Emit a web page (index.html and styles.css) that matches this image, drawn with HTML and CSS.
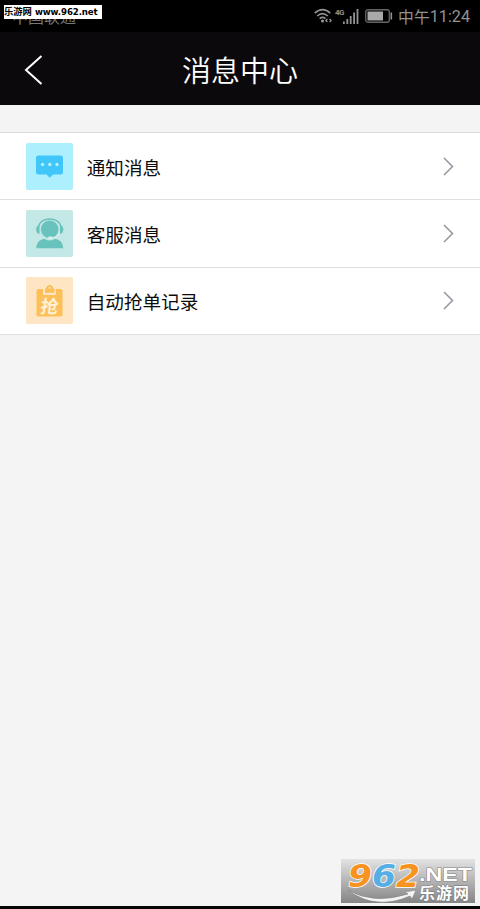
FILE: index.html
```html
<!DOCTYPE html>
<html lang="zh-CN">
<head>
<meta charset="utf-8">
<title>消息中心</title>
<link rel="stylesheet" href="styles.css">
</head>
<body>
<div class="screen">
  <div class="status">
    <span class="carrier">中国联通</span>
    <div class="site-tag"><span class="site-name">乐游网</span><span class="site-url">www.962.net</span></div>
    <div class="indicators">
      <svg class="wifi" width="19" height="16" viewBox="0 0 19 16" fill="none" stroke="#929292" stroke-width="1.6">
        <path d="M.8 5.2Q8.5-1.8 16.2 5.2M3.2 8Q8.5 3.2 13.8 8M5.6 10.7Q8.5 8.2 11.4 10.7"/>
        <circle cx="8.5" cy="13" r="1.6" fill="#929292" stroke="none"/>
        <path d="M13.4 11 11.9 12.5l1.5 1.5M15.600 11l1.500 1.500-1.500 1.500" stroke-width="1.3"/>
      </svg>
      <span class="net">4G</span>
      <svg class="signal" width="16" height="15" viewBox="0 0 16 15" fill="#929292">
        <path d="M0 12.5h1.8V15H0zM3.4 10h1.8v5H3.4zM6.8 7h1.8v8H6.8zM10.2 3.500h1.800V15h-1.800zM13.600 0h1.800v15h-1.800z"/>
      </svg>
      <svg class="battery" width="28" height="14" viewBox="0 0 28 14">
        <rect x=".75" y=".75" width="23.500" height="12.500" rx="2" fill="none" stroke="#666" stroke-width="1.300"/>
        <path d="M2.500 2.500h15.500v9H2.500z" fill="#a8a8a8"/>
        <path d="M25.500 3.500h1.600v7h-1.600z" fill="#929292"/>
      </svg>
      <span class="time"><span class="time-part">中午</span>11:24</span>
    </div>
  </div>
  <header class="header">
    <svg class="back" width="20" height="32" viewBox="0 0 20 32" fill="none" stroke="#fff" stroke-width="2"><path d="M17.500 2 2 16l15.500 14"/></svg>
    <h1 class="title">消息中心</h1>
  </header>
  <main class="list">
    <a class="row">
      <svg class="icon" viewBox="0 0 47 47">
        <rect width="47" height="47" rx="2" fill="#adeffd"/>
        <path d="M12.500 12.500h22a2.500 2.500 0 0 1 2.500 2.500v14a2.500 2.500 0 0 1-2.500 2.500H27L23.700 34.700 20.500 31.500h-8a2.500 2.500 0 0 1-2.500-2.500V15a2.500 2.500 0 0 1 2.500-2.500z" fill="#40c6f8"/>
        <g fill="#b5f3ff"><circle cx="16.500" cy="21.500" r="1.700"/><circle cx="23.800" cy="21.500" r="1.700"/><circle cx="31" cy="21.500" r="1.700"/></g>
      </svg>
      <span class="label">通知消息</span>
      <svg class="chevron" viewBox="0 0 11 19"><path d="M1 1l8.500 8.500L1 18"/></svg>
    </a>
    <a class="row">
      <svg class="icon" viewBox="0 0 47 47">
        <rect width="47" height="47" rx="2" fill="#c4e8e5"/>
        <path d="M12.800 16.500C14 6.500 33.500 6.500 34.700 16.500" fill="none" stroke="#69c3bd" stroke-width="1.500"/>
        <circle cx="23.700" cy="19.300" r="8.800" fill="#69c3bd"/>
        <path d="M13.500 15v9c-4.500-.5-4.500-8.500 0-9zM34 15v9c4.500-.5 4.500-8.500 0-9z" fill="#69c3bd"/>
        <path d="M10.300 38.300c0-5.500 3-8.600 8.200-9.600 3 2.300 7.500 2.300 10.500 0 5.200 1 8.200 4.100 8.200 9.600z" fill="#69c3bd"/>
        <path d="M33.500 23.500c-1.500 3-4.500 4.200-8.500 4.300" fill="none" stroke="#d7f1ee" stroke-width="1.100"/>
        <ellipse cx="24.300" cy="27.700" rx="2.200" ry="1.500" fill="#d7f1ee"/>
      </svg>
      <span class="label">客服消息</span>
      <svg class="chevron" viewBox="0 0 11 19"><path d="M1 1l8.500 8.500L1 18"/></svg>
    </a>
    <a class="row">
      <svg class="icon" viewBox="0 0 47 47">
        <rect width="47" height="47" rx="2" fill="#fee6c4"/>
        <path d="M12.500 12H17v4.500a1.500 1.500 0 0 0 1.500 1.500h10a1.500 1.500 0 0 0 1.500-1.500V12h4.500a2 2 0 0 1 2 2v23.500a2 2 0 0 1-2 2h-22a2 2 0 0 1-2-2V14a2 2 0 0 1 2-2z" fill="#fdbf58"/>
        <path d="M19 11.500h1.200c0-4.800 7-4.800 7 0h1.300v4.200H19z" fill="#fdbf58"/>
        <path d="M22.300 11.500c0-2 2.800-2 2.800 0z" fill="#fee6c4"/>
        <text class="grab" x="-8.800" y="7.700" transform="translate(23.500 28.500) skewX(-8)">抢</text>
      </svg>
      <span class="label">自动抢单记录</span>
      <svg class="chevron" viewBox="0 0 11 19"><path d="M1 1l8.500 8.500L1 18"/></svg>
    </a>
  </main>
  <svg class="watermark" width="134" height="44" viewBox="0 0 134 44">
    <defs>
      <linearGradient id="plate" x1="0" y1="0" x2="0" y2="1"><stop offset="0" stop-color="#e3e3e3"/><stop offset="1" stop-color="#858585"/></linearGradient>
    </defs>
    <rect width="134" height="44" fill="url(#plate)"/>
    <g class="digits">
      <text x="7" y="27.500" textLength="24" lengthAdjust="spacingAndGlyphs" fill="#f7931e">9</text>
      <text x="31" y="27.500" textLength="24" lengthAdjust="spacingAndGlyphs" fill="#55aee4">6</text>
      <text x="55" y="27.500" textLength="24" lengthAdjust="spacingAndGlyphs" fill="#f7931e">2</text>
    </g>
    <path d="M7 31Q32 46 67 35l-3-2 11-2-4 9-2-3Q34 52 7 31z" fill="#f4f4f4" stroke="#858585" stroke-width=".6"/>
    <text class="net-name" x="78" y="21.500" textLength="53" lengthAdjust="spacingAndGlyphs">.NET</text>
    <text class="cn-name" x="78" y="39.500" textLength="50">乐游网</text>
  </svg>
</div>
</body>
</html>
```
FILE: styles.css
```css
body {
  margin: 0;
  font-family: Roboto, "Noto Sans CJK SC", sans-serif;
}

.screen {
  position: relative;
  box-sizing: border-box;
  height: 909px;
  overflow: hidden;
  background: #f4f4f4;
  border-bottom: 3px solid #050505;
}

.status {
  position: relative;
  display: flex;
  align-items: center;
  justify-content: space-between;
  height: 32px;
  padding: 0 10px 0 12px;
  background: #000;
  color: #929292;
}

.carrier {
  padding-top: 4px;
  font-size: 16px;
  line-height: 28px;
  color: #777;
}

.site-tag {
  position: absolute;
  left: 4px;
  top: 5px;
  display: flex;
  align-items: center;
  gap: 3px;
  width: 98px;
  height: 14px;
  background: #fff;
  color: #000;
  font-weight: 700;
  line-height: 14px;
  white-space: nowrap;
}

.site-name {
  font-size: 9.3px;
}

.site-url {
  padding-bottom: 1px;
  font-family: "DejaVu Sans", sans-serif;
  font-size: 8.6px;
  letter-spacing: -0.1px;
}

.indicators {
  display: flex;
  align-items: center;
}

.net {
  align-self: flex-start;
  width: 8px;
  margin: 8px 0 0 2px;
  font-family: Roboto, sans-serif;
  font-size: 8px;
  font-weight: 700;
  line-height: 9px;
  letter-spacing: -0.6px;
}

.battery {
  margin: 0 5px 0 6px;
}

.time {
  display: flex;
  align-items: center;
  padding-top: 1px;
  font-size: 16.2px;
  line-height: 31px;
}

.time-part {
  padding-top: 2px;
  font-size: 15.8px;
  line-height: 29px;
}

.header {
  display: grid;
  grid-template-columns: 48px 1fr 48px;
  align-items: center;
  height: 73px;
  background: #0b090c;
}

.back {
  margin: 2px 0 0 24px;
}

.title {
  margin: 0;
  padding-top: 7px;
  color: #fff;
  font-size: 29px;
  font-weight: 350;
  line-height: 40px;
  text-align: center;
}

.list {
  margin-top: 27px;
  border-top: 1px solid #dcdcdc;
}

.row {
  display: flex;
  align-items: center;
  box-sizing: border-box;
  height: 67.3px;
  padding: 0 26px 0 26.4px;
  background: #fff;
  border-bottom: 1px solid #dfdfdf;
}

.icon {
  flex: none;
  width: 47px;
  height: 47px;
}

.grab {
  fill: #fff0d8;
  font-family: "Noto Sans CJK SC", sans-serif;
  font-size: 18px;
  font-weight: 700;
}

.label {
  flex: 1;
  margin-left: 13.3px;
  padding-top: 5px;
  color: #0c0c0c;
  font-size: 18.6px;
  line-height: 28px;
}

.chevron {
  flex: none;
  width: 11px;
  height: 19px;
  fill: none;
  stroke: #92989e;
  stroke-width: 1.5;
}

.watermark {
  position: absolute;
  left: 341px;
  top: 859px;
  overflow: visible;
}

.digits {
  font-family: "DejaVu Sans", sans-serif;
  font-size: 32px;
  font-weight: 700;
  font-style: italic;
  stroke: #fff;
  stroke-width: 1.5px;
  paint-order: stroke;
}

.net-name {
  fill: #fff;
  stroke: #858585;
  stroke-width: 1px;
  paint-order: stroke;
  font-family: "Liberation Sans", sans-serif;
  font-size: 18px;
  font-weight: 700;
}

.cn-name {
  fill: #fff;
  stroke: #777;
  stroke-width: 1px;
  paint-order: stroke;
  font-family: "Noto Sans CJK SC", sans-serif;
  font-size: 16px;
  font-weight: 700;
}
```
